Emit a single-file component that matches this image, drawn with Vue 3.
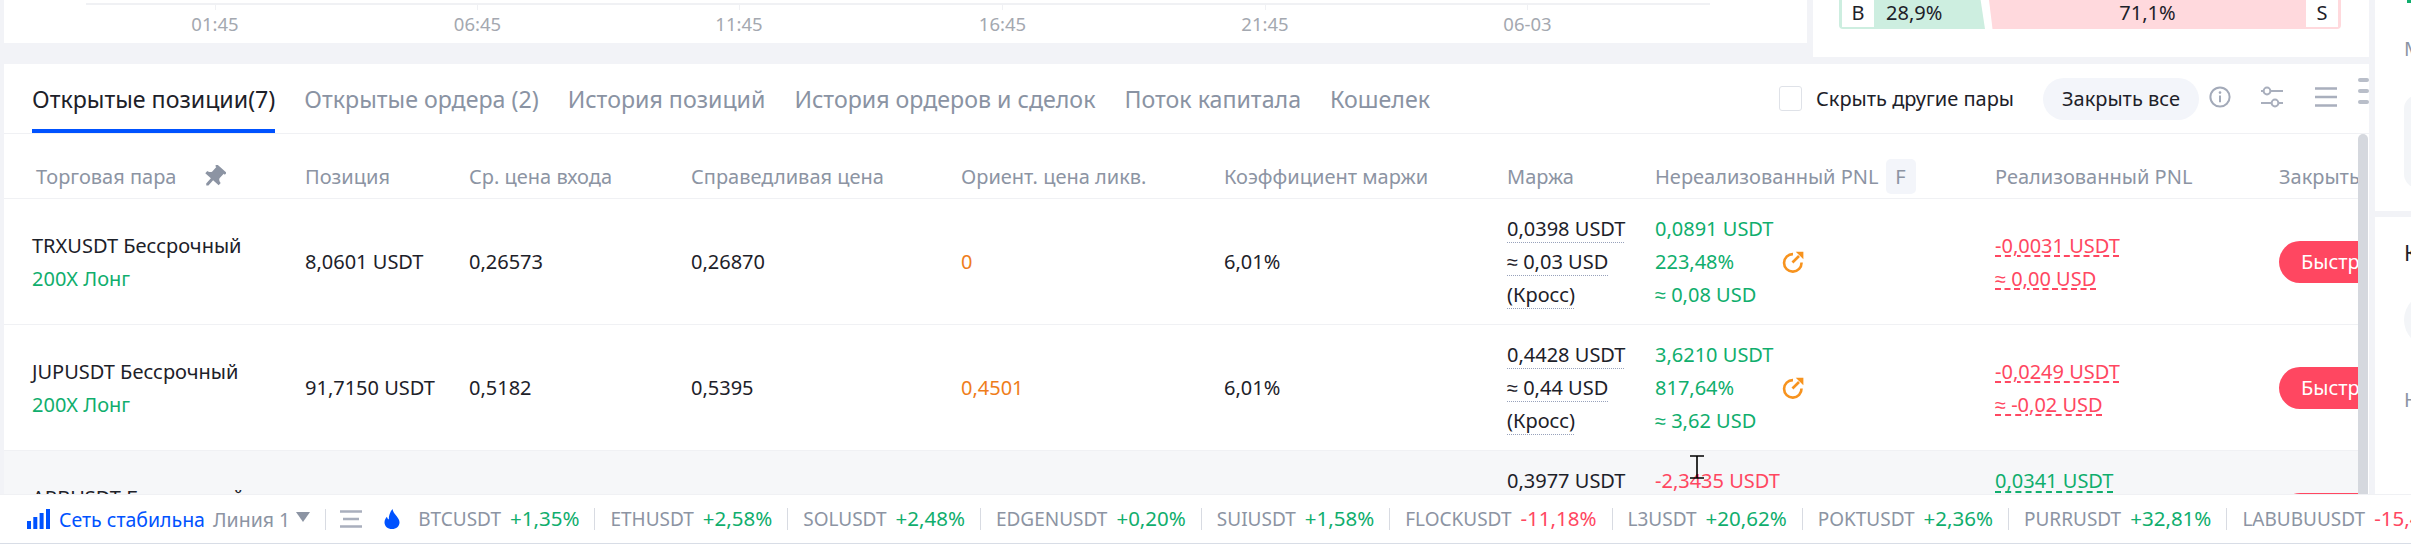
<template>
  <div class="page">
    <div class="workspace">
      <div class="left">
        <div class="top">
          <div class="chart">
            <div class="axis">
              <div v-for="t in ticks" :key="t" class="tick">
                <i></i>
                <span>{{ t }}</span>
              </div>
            </div>
          </div>
          <div class="book">
            <div class="ratio">
              <div class="ratio-buy"><b>B</b><span>28,9%</span></div>
              <div class="ratio-sell"><span>71,1%</span><b>S</b></div>
            </div>
          </div>
        </div>

        <div class="positions">
          <div class="tabs">
            <div
              v-for="(tab, i) in tabs"
              :key="tab"
              class="tab"
              :class="{ active: i === 0 }"
            >{{ tab }}</div>
            <div class="tools">
              <label class="hide-pairs"><span class="check"></span>Скрыть другие пары</label>
              <button class="close-all">Закрыть все</button>
              <svg class="tool info" viewBox="0 0 22 22" width="22" height="22">
                <circle cx="11" cy="11" r="9.6" fill="none" stroke="#a3aab9" stroke-width="2" />
                <circle cx="11" cy="6.6" r="1.3" fill="#a3aab9" />
                <path d="M11 9.6v6.6" stroke="#a3aab9" stroke-width="2" fill="none" />
              </svg>
              <svg class="tool sliders" viewBox="0 0 24 22" width="24" height="22">
                <path d="M10 5h13M1 17h13" stroke="#a9afbd" stroke-width="2" fill="none" />
                <circle cx="7" cy="5" r="3.4" fill="#fff" stroke="#a9afbd" stroke-width="2" />
                <circle cx="15" cy="17" r="3.4" fill="#fff" stroke="#a9afbd" stroke-width="2" />
                <path d="M1 5h2.5M18.5 17H23" stroke="#a9afbd" stroke-width="2" fill="none" />
              </svg>
              <svg class="tool lines" viewBox="0 0 22 20" width="22" height="20">
                <path d="M0 1.5h22M0 10h22M0 18.5h22" stroke="#a9afbd" stroke-width="2.4" fill="none" />
              </svg>
              <div class="dots"><i></i><i></i><i></i></div>
            </div>
          </div>

          <div class="table-area">
            <div class="table">
              <div class="row head">
                <div class="pair-head">Торговая пара
                  <svg viewBox="0 0 24 24" width="24" height="24">
                    <path fill="#8c94a3" transform="rotate(42 12 12)" d="M17 9V3h1.500V.5h-13V3H7v6c0 1.660-2.500 3-4 3v3h7.500V22l1.500 1.500 1.500-1.500v-7H21v-3c-1.500 0-4-1.340-4-3z" />
                  </svg>
                </div>
                <div>Позиция</div>
                <div>Ср. цена входа</div>
                <div>Справедливая цена</div>
                <div>Ориент. цена ликв.</div>
                <div>Коэффициент маржи</div>
                <div>Маржа</div>
                <div class="pnl-head">Нереализованный PNL <span class="f">F</span></div>
                <div>Реализованный PNL</div>
                <div class="nowrap">Закрыть</div>
              </div>

              <div
                v-for="(r, i) in rows"
                :key="r.pair"
                class="row item"
                :class="{ hover: i === 2 }"
              >
                <div class="stack">
                  <div>{{ r.pair }} Бессрочный</div>
                  <div class="green">200X Лонг</div>
                </div>
                <div>{{ r.size }}</div>
                <div>{{ r.entry }}</div>
                <div>{{ r.fair }}</div>
                <div class="orange">{{ r.liq }}</div>
                <div>6,01%</div>
                <div class="stack">
                  <div class="dotted">{{ r.margin }} USDT</div>
                  <div class="dotted">≈ {{ r.marginUsd }} USD</div>
                  <div class="dotted">(Кросс)</div>
                </div>
                <div class="stack" :class="r.pnlUp ? 'green' : 'red'">
                  <div>{{ r.pnl }} USDT</div>
                  <div class="pct">{{ r.pct }}
                    <svg class="share" viewBox="0 0 22 22" width="24" height="24">
                      <path d="M11 3.800A8 8 0 1 0 18.800 11.500" fill="none" stroke="#f7931e" stroke-width="2.400" />
                      <path d="M10.500 11.500 16.500 5.500" fill="none" stroke="#f7931e" stroke-width="2.400" />
                      <path d="M13.500 1.500H20.500V8.500Z" fill="#f7931e" />
                    </svg>
                  </div>
                  <div>≈ {{ r.pnlUsd }} USD</div>
                </div>
                <div class="stack" :class="r.realUp ? 'green' : 'red'">
                  <div class="dashed">{{ r.real }} USDT</div>
                  <div class="dashed">≈ {{ r.realUsd }} USD</div>
                  <div v-if="r.realUp">&nbsp;</div>
                </div>
                <div class="nowrap"><button class="fast">Быстрое закрытие</button></div>
              </div>
            </div>
            <div class="scrollbar"></div>
          </div>
        </div>
      </div>

      <div class="side">
        <div class="side-top">
          <div class="arc"></div>
          <div class="side-label">М</div>
          <div class="side-input"></div>
        </div>
        <div class="side-bottom">
          <div class="side-title">К</div>
          <div class="side-circle"></div>
          <div class="side-label low">Н</div>
        </div>
      </div>
    </div>

    <div class="ticker">
      <svg class="signal" viewBox="0 0 23 20" width="23" height="20">
        <path fill="#0052ff" d="M0 12h4v8H0zM6.300 8h4v12h-4zM12.600 4h4v16h-4zM19 0h4v20h-4z" />
      </svg>
      <span class="net">Сеть стабильна</span>
      <span class="line-name">Линия 1</span>
      <span class="caret"></span>
      <i class="sep first"></i>
      <svg class="menu" viewBox="0 0 22 18" width="22" height="18">
        <path d="M0 1.500h22M3 9h16M0 16.500h22" stroke="#a9afbd" stroke-width="2.400" fill="none" />
      </svg>
      <svg class="flame" viewBox="0 0 16 20" width="16" height="20">
        <path fill="#0052ff" d="M8.500 0c.5 3 2 4.500 4 7 1.800 2.300 3 4 3 6.500C15.500 17.300 12.300 20 8 20S.5 17.300.5 13.500C.5 11 1.700 9 3 7.700c.2 1.400.8 2.300 1.800 2.800C4.700 6.500 6 3 8.500 0z" />
      </svg>
      <div v-for="(t, i) in tickers" :key="t.name" class="coin" :class="{ 'no-sep': i === 0 }">
        <span class="coin-name">{{ t.name }}</span>
        <span class="coin-change" :class="t.change[0] === '+' ? 'green' : 'red'">{{ t.change }}</span>
      </div>
    </div>

    <svg class="cursor" viewBox="0 0 14 24" width="14" height="24">
      <path d="M0 1h14M0 23h14M7 1v22" stroke="#000" stroke-width="1.600" fill="none" />
    </svg>
  </div>
</template>

<script setup>
const ticks = ['01:45', '06:45', '11:45', '16:45', '21:45', '06-03']

const tabs = [
  'Открытые позиции(7)',
  'Открытые ордера (2)',
  'История позиций',
  'История ордеров и сделок',
  'Поток капитала',
  'Кошелек',
]

const rows = [
  {
    pair: 'TRXUSDT', size: '8,0601 USDT', entry: '0,26573', fair: '0,26870', liq: '0',
    margin: '0,0398', marginUsd: '0,03', pnl: '0,0891', pct: '223,48%', pnlUsd: '0,08', pnlUp: true,
    real: '-0,0031', realUsd: '0,00', realUp: false,
  },
  {
    pair: 'JUPUSDT', size: '91,7150 USDT', entry: '0,5182', fair: '0,5395', liq: '0,4501',
    margin: '0,4428', marginUsd: '0,44', pnl: '3,6210', pct: '817,64%', pnlUsd: '3,62', pnlUp: true,
    real: '-0,0249', realUsd: '-0,02', realUp: false,
  },
  {
    pair: 'ARBUSDT', size: '', entry: '', fair: '', liq: '',
    margin: '0,3977', marginUsd: '0,39', pnl: '-2,3435', pct: '-589,27%', pnlUsd: '-2,34', pnlUp: false,
    real: '0,0341', realUsd: '0,03', realUp: true,
  },
]

const tickers = [
  { name: 'BTCUSDT', change: '+1,35%' },
  { name: 'ETHUSDT', change: '+2,58%' },
  { name: 'SOLUSDT', change: '+2,48%' },
  { name: 'EDGENUSDT', change: '+0,20%' },
  { name: 'SUIUSDT', change: '+1,58%' },
  { name: 'FLOCKUSDT', change: '-11,18%' },
  { name: 'L3USDT', change: '+20,62%' },
  { name: 'POKTUSDT', change: '+2,36%' },
  { name: 'PURRUSDT', change: '+32,81%' },
  { name: 'LABUBUUSDT', change: '-15,44%' },
]
</script>

<style>
html, body {
  margin: 0;
  background: #f2f3f7;
}
</style>

<style scoped>
.page {
  position: relative;
  width: 2411px;
  height: 544px;
  overflow: hidden;
  display: flex;
  flex-direction: column;
  background: #f2f3f7;
  font-family: "Noto Sans", "Liberation Sans", sans-serif;
  font-size: 20px;
  color: #1d2129;
}

.workspace {
  flex: 0 0 494px;
  display: flex;
  overflow: hidden;
}

.left {
  width: 2369px;
  padding-left: 4px;
  box-sizing: border-box;
  display: flex;
  flex-direction: column;
}

.top {
  flex: 0 0 57px;
  margin-bottom: 7px;
  display: flex;
  align-items: flex-start;
  gap: 6px;
}

.chart {
  width: 1803px;
  height: 43px;
  background: #fff;
  box-sizing: border-box;
  padding-left: 82px;
}

.axis {
  position: relative;
  width: 1624px;
  height: 40px;
  box-sizing: border-box;
  margin-top: 3px;
  border-top: 2px solid #f0f1f4;
}

.tick {
  position: absolute;
  top: 0;
  display: flex;
  flex-direction: column;
  align-items: center;
  width: 80px;
  margin-left: -40px;
  color: #a4a8b0;
  font-size: 18.5px;
  line-height: 22px;
}

.tick:nth-child(1) { left: 129px; }
.tick:nth-child(2) { left: 391.5px; }
.tick:nth-child(3) { left: 653px; }
.tick:nth-child(4) { left: 916.5px; }
.tick:nth-child(5) { left: 1179px; }
.tick:nth-child(6) { left: 1441.5px; }

.tick i {
  width: 1px;
  height: 5px;
  background: #f0f1f4;
  margin-bottom: 3px;
}

.book {
  flex: 1;
  height: 57px;
  background: #fff;
  padding: 0 28px 0 26px;
  box-sizing: border-box;
}

.ratio {
  display: flex;
  height: 29px;
  line-height: 26px;
}

.ratio b {
  font-weight: 400;
  background: #fff;
  width: 32px;
  height: 27px;
  text-align: center;
  flex: none;
}

.ratio-buy {
  width: 146px;
  background: #cdeee0;
  border-radius: 0 0 0 4px;
  display: flex;
  gap: 12px;
  padding-left: 3px;
  box-sizing: border-box;
  clip-path: polygon(0 0, 97% 0, 100% 100%, 0 100%);
}

.ratio-sell {
  flex: 1;
  background: #ffd9dd;
  display: flex;
  justify-content: center;
  margin-left: 4px;
  padding-right: 3px;
  border-radius: 0 0 4px 0;
  clip-path: polygon(0 0, 100% 0, 100% 100%, 1% 100%);
}

.ratio-sell span {
  flex: 1;
  text-align: center;
}

.positions {
  flex: 1;
  background: #fff;
  overflow: hidden;
  display: flex;
  flex-direction: column;
}

.tabs {
  flex: 0 0 70px;
  box-sizing: border-box;
  border-bottom: 1px solid #f0f1f4;
  padding-left: 28px;
  display: flex;
  gap: 29px;
}

.tab {
  font-size: 23.2px;
  line-height: 70px;
  color: #8a93a3;
  white-space: nowrap;
  height: 69px;
  box-sizing: border-box;
}

.tab.active {
  color: #1d2129;
  border-bottom: 4px solid #0052ff;
}

.tools {
  margin-left: auto;
  display: flex;
  align-items: center;
  height: 69px;
}

.hide-pairs {
  display: flex;
  align-items: center;
  gap: 14px;
  white-space: nowrap;
}

.check {
  width: 21px;
  height: 23px;
  border: 1px solid #dfe2e8;
  border-radius: 3px;
}

.close-all {
  margin-left: 29px;
  width: 156px;
  height: 42px;
  border: 0;
  border-radius: 21px;
  background: #f3f5fa;
  font: inherit;
  color: #1d2129;
  padding: 0;
}

.tool {
  flex: none;
  margin-top: -3px;
}

.info { margin-left: 10px; }
.sliders { margin-left: 29px; }
.lines { margin-left: 31px; }

.dots {
  width: 11px;
  margin-left: 21px;
  display: flex;
  flex-direction: column;
  gap: 7px;
  margin-top: -15px;
}

.dots i {
  height: 4px;
  border-radius: 2px;
  background: #b9bec9;
}

.table-area {
  flex: 1;
  min-height: 0;
  display: flex;
}

.table {
  width: 2354px;
  overflow: hidden;
}

.scrollbar {
  width: 10px;
  margin-right: 1px;
  background: #d5d8de;
  border-radius: 5px 5px 0 0;
  flex: none;
}

.row {
  display: grid;
  grid-template-columns: 273px 164px 222px 270px 263px 283px 148px 340px 284px 79px;
  padding-left: 28px;
  align-items: center;
  white-space: nowrap;
}

.head {
  height: 65px;
  box-sizing: border-box;
  padding-top: 21px;
  border-bottom: 1px solid #f0f1f4;
  color: #8c94a3;
}

.pair-head {
  padding-left: 4px;
  display: flex;
  align-items: center;
  gap: 26px;
}

.pnl-head {
  display: flex;
  align-items: center;
  gap: 7px;
}

.f {
  width: 30px;
  height: 35px;
  line-height: 35px;
  background: #f3f5fa;
  border-radius: 5px;
  text-align: center;
}

.item {
  height: 126px;
  box-sizing: border-box;
  border-bottom: 1px solid #f0f1f4;
  line-height: 33px;
}

.hover {
  background: #f6f7f9;
}

.nowrap {
  white-space: nowrap;
  overflow: hidden;
}

.green { color: #10ae6d; }
.red { color: #ff4761; }
.orange { color: #ef7d1a; }

.dotted {
  text-decoration: underline dotted #98a2bb 1px;
  text-underline-offset: 6px;
}

.dashed {
  text-decoration: underline dashed currentColor 2px;
  text-underline-offset: 3px;
}

.pct {
  position: relative;
}

.share {
  position: absolute;
  left: 126px;
  top: 5px;
}

.fast {
  height: 42px;
  width: 180px;
  border: 0;
  border-radius: 21px;
  background: #ff4761;
  color: #fff;
  font: inherit;
  text-align: left;
  padding: 0 0 0 22px;
  white-space: nowrap;
  display: block;
}

.side {
  flex: 1;
  margin-left: 6px;
  display: flex;
  flex-direction: column;
  gap: 6px;
}

.side-top {
  flex: 0 0 211px;
  background: #fff;
  padding-left: 29px;
  position: relative;
}

.side-bottom {
  flex: 1;
  background: #fff;
  padding-left: 29px;
  overflow: hidden;
}

.arc {
  position: absolute;
  left: 32px;
  top: 0;
  width: 6px;
  height: 3px;
  background: #10ae6d;
}

.side-label {
  color: #8c94a3;
  padding-top: 36px;
  line-height: 26px;
  white-space: nowrap;
}

.side-input {
  margin-top: 33px;
  height: 93px;
  background: #f3f5f8;
  border-radius: 14px 0 0 14px;
}

.side-title {
  font-size: 22px;
  line-height: 30px;
  padding-top: 20px;
}

.side-circle {
  margin-top: 26px;
  width: 54px;
  height: 54px;
  border-radius: 50%;
  background: #f3f5f8;
}

.side-label.low {
  padding-top: 40px;
}

.ticker {
  flex: 0 0 50px;
  box-sizing: border-box;
  background: #fff;
  border-top: 1px solid #f0f1f4;
  border-bottom: 1px solid #d8dde6;
  display: flex;
  align-items: center;
  padding-left: 27px;
  white-space: nowrap;
  overflow: hidden;
}

.signal {
  flex: none;
}

.net {
  color: #0052ff;
  font-size: 19.5px;
  margin-left: 9px;
}

.line-name {
  color: #8c94a3;
  font-size: 19.5px;
  margin-left: 8px;
}

.caret {
  flex: none;
  margin-left: 6px;
  margin-top: -4px;
  border-left: 7px solid transparent;
  border-right: 7px solid transparent;
  border-top: 10px solid #8c94a3;
}

.sep {
  flex: none;
  width: 1px;
  height: 21px;
  background: #d8dbe2;
}

.sep.first {
  margin-left: 15px;
}

.menu {
  flex: none;
  margin-left: 14px;
}

.flame {
  flex: none;
  margin-left: 22px;
  margin-right: 18px;
}

.coin {
  flex: none;
  padding: 0 15px;
  border-left: 1px solid #d8dbe2;
  line-height: 21px;
}

.coin.no-sep {
  border-left: 0;
  padding-left: 0;
}

.coin-name {
  color: #8c94a3;
  font-size: 19px;
  margin-right: 9px;
}

.coin-change {
  font-size: 20.5px;
}

.cursor {
  position: absolute;
  left: 1690px;
  top: 455px;
}
</style>
